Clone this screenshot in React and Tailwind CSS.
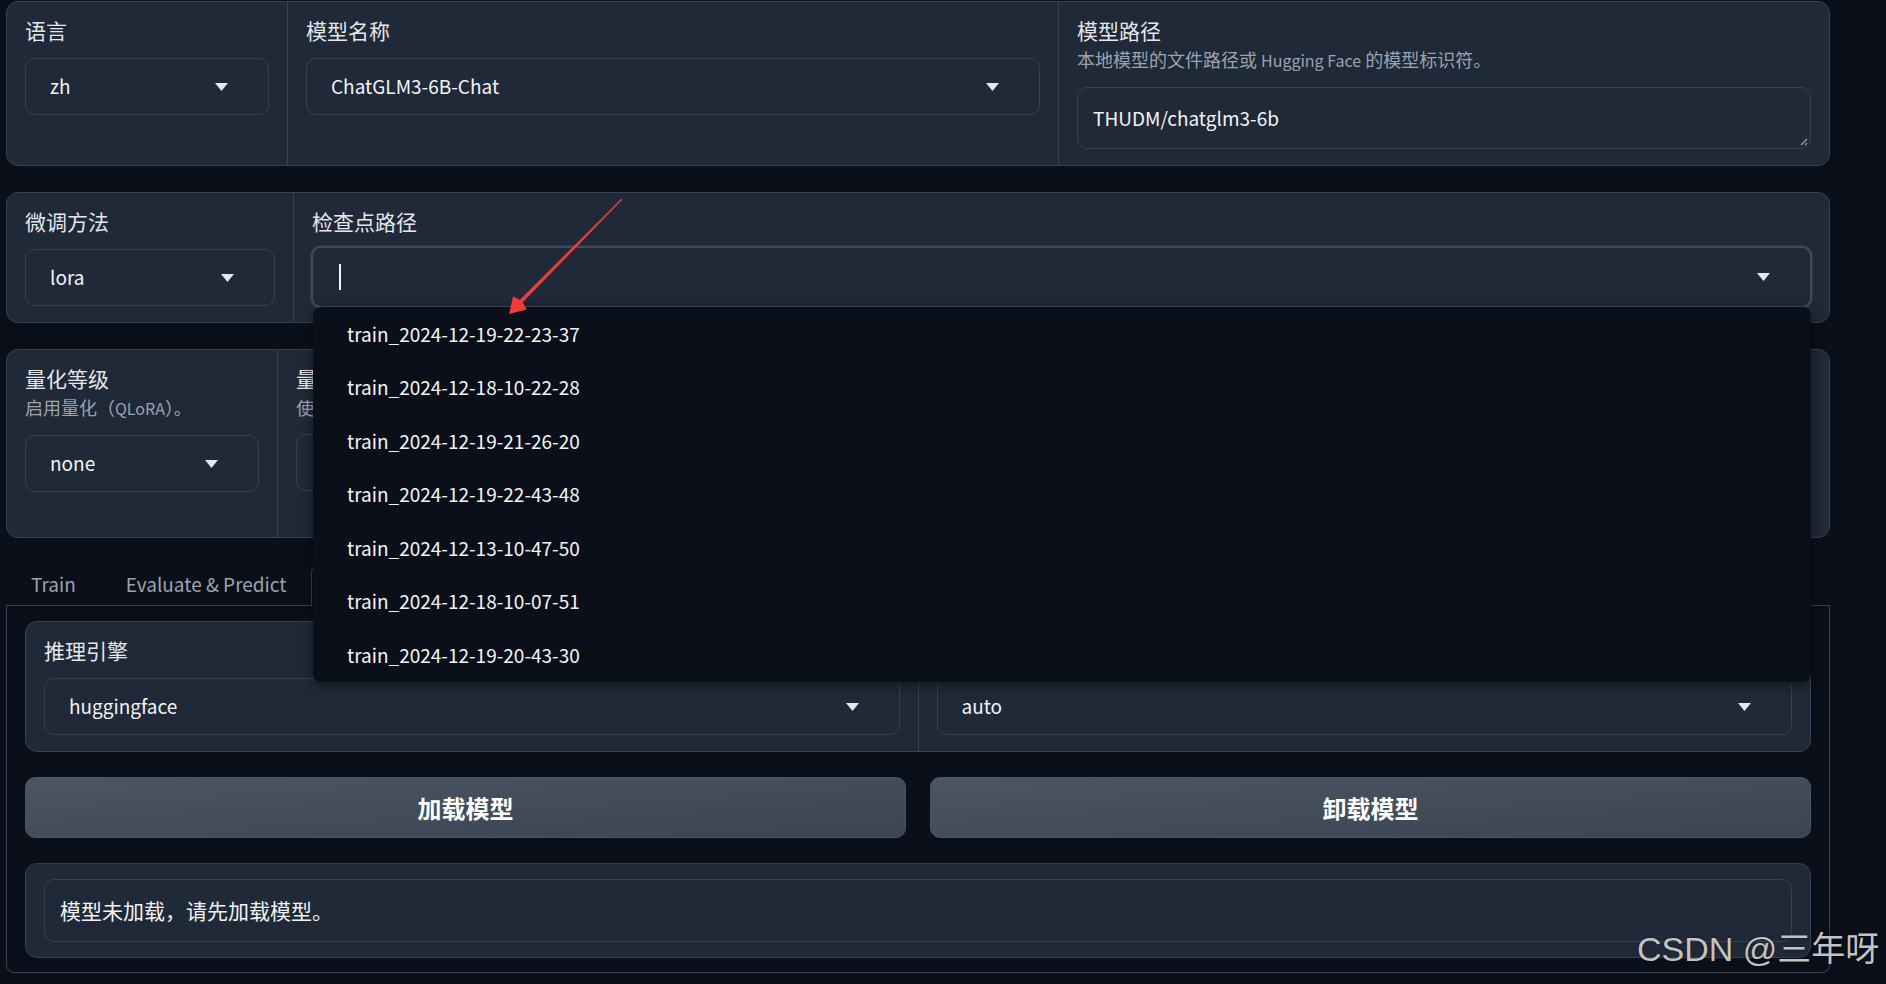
const checkpoints = [
  "train_2024-12-19-22-23-37",
  "train_2024-12-18-10-22-28",
  "train_2024-12-19-21-26-20",
  "train_2024-12-19-22-43-48",
  "train_2024-12-13-10-47-50",
  "train_2024-12-18-10-07-51",
  "train_2024-12-19-20-43-30",
];

const Caret = () => (
  <svg width="13" height="8" viewBox="0 0 13 8" className="shrink-0">
    <path d="M0 0h13L6.5 8z" fill="#e5e7eb" />
  </svg>
);

const Select = ({ value }) => (
  <div className="flex h-[57px] items-center justify-between rounded-[10px] border border-[#374151] bg-[#1f2937] pl-[24px] pr-[40px] text-[19px] text-[#f3f4f6]">
    <span>{value}</span>
    <Caret />
  </div>
);

const Field = ({ label, info, className = "", children }) => (
  <div className={`flex flex-col px-[18px] pt-[12px] pb-[16px] ${className}`}>
    <div className="text-[21px] leading-[32px] text-[#e5e7eb]">{label}</div>
    {info && (
      <div className="text-[18px] leading-[27px] text-[#9ca3af]">{info}</div>
    )}
    <div className={info ? "mt-[13px]" : "mt-[12px]"}>{children}</div>
  </div>
);

const Panel = ({ className = "", children }) => (
  <div
    className={`flex rounded-[12px] border border-[#374151] bg-[#1f2937] ${className}`}
  >
    {children}
  </div>
);

const App = () => {
  return (
    <div className="relative h-[984px] w-[1886px] overflow-hidden bg-[#0b0f19] font-['Noto_Sans_CJK_SC','Noto_Sans',sans-serif]">
      <div className="ml-[6px] flex w-[1824px] flex-col gap-[26px] pt-px">
        {/* model row */}
        <Panel>
          <Field label="语言" className="w-[280px]">
            <Select value="zh" />
          </Field>
          <Field label="模型名称" className="w-[771px] border-l border-[#374151]">
            <Select value="ChatGLM3-6B-Chat" />
          </Field>
          <Field
            label="模型路径"
            info={
              <>
                本地模型的文件路径或 <span className="text-[16px]">Hugging Face</span> 的模型标识符。
              </>
            }
            className="flex-1 border-l border-[#374151]"
          >
            <div className="relative flex h-[62px] items-center rounded-[10px] border border-[#374151] bg-[#1f2937] pl-[15px] text-[19px] text-[#f3f4f6]">
              THUDM/chatglm3-6b
              <svg
                width="8"
                height="8"
                viewBox="0 0 8 8"
                className="absolute bottom-[2px] right-[2px]"
              >
                <path d="M7 1L1 7M7 5L5 7" stroke="#9ca3af" strokeWidth="1.2" />
              </svg>
            </div>
          </Field>
        </Panel>

        {/* finetune row */}
        <Panel className="relative z-40">
          <Field label="微调方法" className="w-[286px]">
            <Select value="lora" />
          </Field>
          <div className="flex flex-1 flex-col border-l border-[#374151] px-[18px] pt-[12px] pb-[14px]">
            <div className="text-[21px] leading-[32px] text-[#e5e7eb]">检查点路径</div>
            <div className="relative -mx-px mt-[9px]">
              <div className="flex h-[62px] items-center justify-between rounded-[10px] border-2 border-[#414b5a] bg-[#1f2937] pl-[26px] pr-[40px] shadow-[0_0_0_1px_rgba(55,65,81,0.6)]">
                <div className="h-[26px] w-[2px] bg-[#f3f4f6]" />
                <Caret />
              </div>
              <ul className="absolute left-[2px] right-px top-[61px] z-50 rounded-[8px] bg-[#0b0f19] shadow-[0_4px_12px_rgba(0,0,0,0.4)]">
                {checkpoints.map((c) => (
                  <li
                    key={c}
                    className="flex h-[53.5px] items-center pl-[34px] text-[19px] text-[#f3f4f6]"
                  >
                    {c}
                  </li>
                ))}
              </ul>
            </div>
          </div>
        </Panel>

        {/* quantization row */}
        <Panel className="h-[189px]">
          <Field
            label="量化等级"
            info={
              <>
                启用量化（<span className="text-[16px]">QLoRA</span>）。
              </>
            }
            className="w-[270px]"
          >
            <Select value="none" />
          </Field>
          <Field
            label="量化方法"
            info="使用的量化方法。"
            className="w-[300px] border-l border-[#374151]"
          >
            <Select value="bitsandbytes" />
          </Field>
          <Field
            label="提示模板"
            info="构建提示词时使用的模板"
            className="flex-1 border-l border-[#374151]"
          >
            <Select value="chatglm3" />
          </Field>
          <Field
            label="加速方式"
            className="w-[420px] border-l border-[#374151]"
          >
            <Select value="auto" />
          </Field>
        </Panel>

        {/* tabs */}
        <div className="flex flex-col">
          <div className="flex h-[42px] border-b border-[#374151] text-[19px] text-[#9ca3af]">
            <div className="flex items-center px-[25px]">Train</div>
            <div className="flex items-center px-[25px]">Evaluate &amp; Predict</div>
            <div className="-mb-px flex h-[42px] items-center rounded-t-[8px] border-x border-t border-[#374151] bg-[#0b0f19] px-[25px] text-[#e5e7eb]">
              Chat
            </div>
            <div className="flex items-center px-[25px]">Export</div>
          </div>

          <div className="flex flex-col gap-[25px] rounded-b-[8px] border-x border-b border-[#374151] px-[18px] pt-[15px] pb-[14px]">
            <Panel>
              <Field label="推理引擎" className="flex-1">
                <Select value="huggingface" />
              </Field>
              <Field
                label="推理数据类型"
                className="flex-1 border-l border-[#374151]"
              >
                <Select value="auto" />
              </Field>
            </Panel>

            <div className="flex gap-[24px]">
              <button className="flex h-[61px] flex-1 items-center justify-center rounded-[10px] border border-[#4b5563] bg-linear-to-br from-[#4b5563] to-[#3a4453] text-[24px] font-bold text-white">
                加载模型
              </button>
              <button className="flex h-[61px] flex-1 items-center justify-center rounded-[10px] border border-[#4b5563] bg-linear-to-br from-[#4b5563] to-[#3a4453] text-[24px] font-bold text-white">
                卸载模型
              </button>
            </div>

            <Panel className="px-[18px] py-[15px]">
              <div className="flex h-[63px] flex-1 items-center rounded-[10px] border border-[#374151] bg-[#1f2937] pl-[15px] text-[21px] text-[#f3f4f6]">
                模型未加载，请先加载模型。
              </div>
            </Panel>
          </div>
        </div>
      </div>

      {/* annotation arrow */}
      <svg
        className="pointer-events-none absolute left-0 top-0 z-[60]"
        width="1886"
        height="984"
        viewBox="0 0 1886 984"
      >
        <polygon
          points="509,314 527,309.5 522.6,302.6 622.4,199.4 621.6,198.6 519.8,299.8 513,296.5"
          fill="#ef3b3b"
        />
      </svg>

      {/* watermark */}
      <div className="absolute left-[1637px] top-[932px] z-[70] whitespace-nowrap font-['Liberation_Sans','Noto_Sans_CJK_SC',sans-serif] text-[34px] leading-[34px] text-[#c3c3c3] [text-shadow:0_0_2px_rgba(0,0,0,0.7)]">
        CSDN @三年呀
      </div>
    </div>
  );
};

export default App;
